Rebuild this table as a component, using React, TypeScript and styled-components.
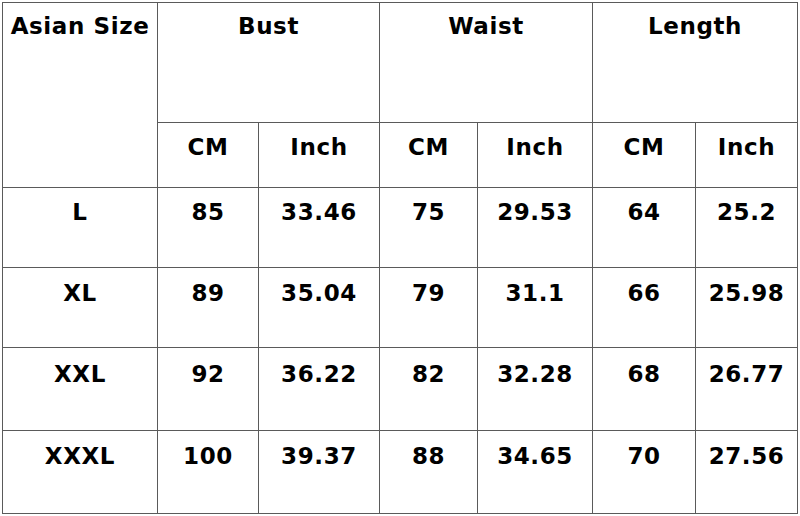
import React from "react";
import styled, { createGlobalStyle } from "styled-components";

const Global = createGlobalStyle`
  html, body { margin: 0; padding: 0; background: #fff; }
  body { width: 800px; height: 516px; overflow: hidden; }
`;

const Page = styled.div`
  padding: 2px 0 0 2px;
  background: #fff;
`;

const Table = styled.table`
  border-collapse: collapse;
  table-layout: fixed;
  width: 795px;
  font-family: "Comic Sans MS", "DejaVu Sans", sans-serif;
  font-weight: bold;
  color: #000;
`;

const Row = styled.tr<{ $h: number }>`
  height: ${(p) => p.$h}px;
`;

const Cell = styled.td<{ $pt?: number }>`
  border: 1px solid #5a5a5a;
  padding: ${(p) => p.$pt ?? 11}px 0 0 0;
  vertical-align: top;
  text-align: center;
  font-size: 23px;
  letter-spacing: 0.6px;
  line-height: 26px;
  white-space: nowrap;
  overflow: hidden;
`;

const widths = [155, 101, 121, 98, 115, 103, 102];

const rows: [string, string, string, string, string, string, string, number, number][] = [
  ["L", "85", "33.46", "75", "29.53", "64", "25.2", 80, 11],
  ["XL", "89", "35.04", "79", "31.1", "66", "25.98", 80, 12],
  ["XXL", "92", "36.22", "82", "32.28", "68", "26.77", 83, 13],
  ["XXXL", "100", "39.37", "88", "34.65", "70", "27.56", 83, 12],
];

export default function App() {
  return (
    <Page>
      <Global />
      <Table>
        <colgroup>
          {widths.map((w, i) => (
            <col key={i} style={{ width: w }} />
          ))}
        </colgroup>
        <tbody>
          <Row $h={120}>
            <Cell rowSpan={2} $pt={10}>Asian Size</Cell>
            <Cell colSpan={2} $pt={10}>Bust</Cell>
            <Cell colSpan={2} $pt={10}>Waist</Cell>
            <Cell colSpan={2} $pt={10}>Length</Cell>
          </Row>
          <Row $h={65}>
            <Cell $pt={11}>CM</Cell>
            <Cell $pt={11}>Inch</Cell>
            <Cell $pt={11}>CM</Cell>
            <Cell $pt={11}>Inch</Cell>
            <Cell $pt={11}>CM</Cell>
            <Cell $pt={11}>Inch</Cell>
          </Row>
          {rows.map((r) => (
            <Row key={r[0]} $h={r[7]}>
              {r.slice(0, 7).map((v, i) => (
                <Cell key={i} $pt={r[8]}>
                  {v}
                </Cell>
              ))}
            </Row>
          ))}
        </tbody>
      </Table>
    </Page>
  );
}
